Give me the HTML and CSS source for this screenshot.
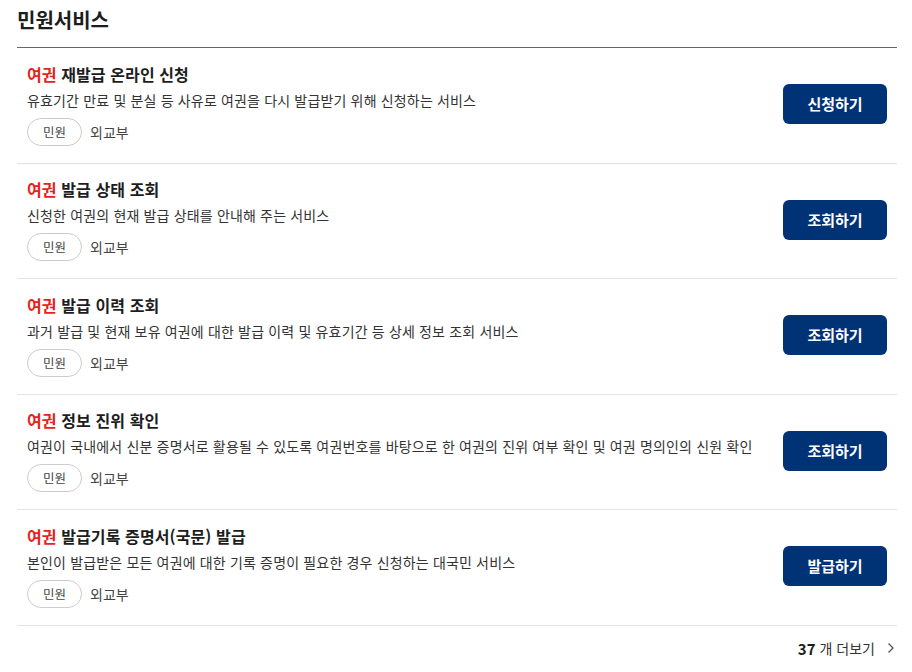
FILE: index.html
```html
<!DOCTYPE html>
<html lang="ko">
<head>
  <meta charset="UTF-8">
  <title>민원서비스</title>
  <link rel="stylesheet" href="styles.css">
</head>
<body>
  <section class="service">
    <h2 class="service-title">민원서비스</h2>
    <ul class="service-list">
      <li class="service-item">
        <div class="service-info">
          <p class="item-title"><em>여권</em> 재발급 온라인 신청</p>
          <p class="item-desc">유효기간 만료 및 분실 등 사유로 여권을 다시 발급받기 위해 신청하는 서비스</p>
          <div class="item-meta"><span class="tag">민원</span><span class="org">외교부</span></div>
        </div>
        <a class="btn" href="#">신청하기</a>
      </li>
      <li class="service-item">
        <div class="service-info">
          <p class="item-title"><em>여권</em> 발급 상태 조회</p>
          <p class="item-desc">신청한 여권의 현재 발급 상태를 안내해 주는 서비스</p>
          <div class="item-meta"><span class="tag">민원</span><span class="org">외교부</span></div>
        </div>
        <a class="btn" href="#">조회하기</a>
      </li>
      <li class="service-item">
        <div class="service-info">
          <p class="item-title"><em>여권</em> 발급 이력 조회</p>
          <p class="item-desc">과거 발급 및 현재 보유 여권에 대한 발급 이력 및 유효기간 등 상세 정보 조회 서비스</p>
          <div class="item-meta"><span class="tag">민원</span><span class="org">외교부</span></div>
        </div>
        <a class="btn" href="#">조회하기</a>
      </li>
      <li class="service-item">
        <div class="service-info">
          <p class="item-title"><em>여권</em> 정보 진위 확인</p>
          <p class="item-desc">여권이 국내에서 신분 증명서로 활용될 수 있도록 여권번호를 바탕으로 한 여권의 진위 여부 확인 및 여권 명의인의 신원 확인</p>
          <div class="item-meta"><span class="tag">민원</span><span class="org">외교부</span></div>
        </div>
        <a class="btn" href="#">조회하기</a>
      </li>
      <li class="service-item">
        <div class="service-info">
          <p class="item-title"><em>여권</em> 발급기록 증명서(국문) 발급</p>
          <p class="item-desc">본인이 발급받은 모든 여권에 대한 기록 증명이 필요한 경우 신청하는 대국민 서비스</p>
          <div class="item-meta"><span class="tag">민원</span><span class="org">외교부</span></div>
        </div>
        <a class="btn" href="#">발급하기</a>
      </li>
    </ul>
    <div class="more">
      <a href="#"><strong>37</strong> 개 더보기
        <svg width="8" height="12" viewBox="0 0 8 12"><path d="M1.5 1.5 6 6l-4.5 4.5" fill="none" stroke="#555" stroke-width="1.3"/></svg>
      </a>
    </div>
  </section>
</body>
</html>
```

FILE: styles.css
```css
@charset "UTF-8";
body {
  margin: 0;
  font-family: "Noto Sans CJK KR", "Noto Sans", sans-serif;
  color: #1d1d1d;
  background: #fff;
}

.service {
  width: 880px;
  margin: 0 0 0 17px;
}
.service-title {
  margin: 0;
  padding-top: 7px;
  height: 40px;
  font-size: 20px;
  line-height: 26px;
  font-weight: 700;
  border-bottom: 1px solid #666;
}

.service-list {
  list-style: none;
  margin: 0;
  padding: 0;
}
.service-item {
  display: flex;
  align-items: center;
  justify-content: space-between;
  height: 112.5px;
  padding: 0 10px 2px;
  border-bottom: 1px solid #e2e2e2;
}
.service-item p {
  margin: 0;
}
.item-title {
  font-size: 16px;
  line-height: 22px;
  font-weight: 700;
  letter-spacing: 0.1px;
}
.item-title em {
  font-style: normal;
  color: #e5231b;
}
.item-desc {
  margin-top: 4px !important;
  font-size: 14px;
  line-height: 22px;
  letter-spacing: 0.16px;
  color: #333;
}
.item-meta {
  display: flex;
  align-items: center;
  margin-top: 7px;
}
.tag {
  box-sizing: border-box;
  width: 55px;
  height: 28px;
  line-height: 26px;
  text-align: center;
  border: 1px solid #ccc;
  border-radius: 14px;
  font-size: 12.5px;
  color: #444;
}
.org {
  margin-left: 8px;
  font-size: 14px;
  color: #444;
}

.btn {
  flex: none;
  width: 104px;
  height: 40px;
  line-height: 40px;
  text-align: center;
  border-radius: 6px;
  background: #003276;
  color: #fff;
  font-size: 15px;
  font-weight: 700;
  text-decoration: none;
}

.more {
  display: flex;
  justify-content: flex-end;
  padding: 12px 2px 0 0;
}
.more a {
  display: flex;
  align-items: center;
  gap: 12px;
  font-size: 14px;
  color: #333;
  text-decoration: none;
}
.more strong {
  margin-right: -8px;
  font-size: 15px;
  color: #1d1d1d;
}
```
